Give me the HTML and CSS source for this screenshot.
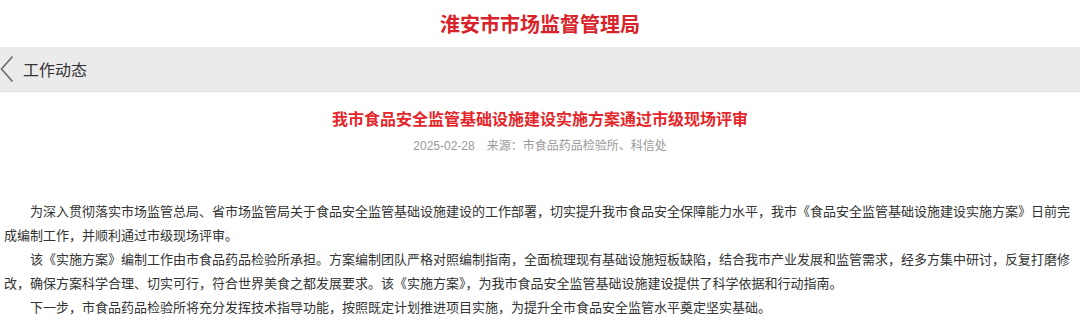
FILE: index.html
```html
<!DOCTYPE html>
<html lang="zh-CN">
<head>
<meta charset="utf-8">
<title>淮安市市场监督管理局</title>
<link rel="stylesheet" href="styles.css">
</head>
<body>
<header class="site-header">
  <h1 class="site-title">淮安市市场监督管理局</h1>
</header>
<nav class="nav-bar">
  <svg class="back-icon" width="14" height="28" viewBox="0 0 14 28" aria-hidden="true">
    <path d="M12.5 1.5 L1.5 14 L12.5 26.5" fill="none" stroke="#6b6b6b" stroke-width="1.6"/>
  </svg>
  <span class="nav-text">工作动态</span>
</nav>
<main class="article">
  <h2 class="article-title">我市食品安全监管基础设施建设实施方案通过市级现场评审</h2>
  <div class="article-meta"><span class="meta-date">2025-02-28</span><span class="meta-source">来源：市食品药品检验所、科信处</span></div>
  <div class="article-body">
    <p>为深入贯彻落实市场监管总局、省市场监管局关于食品安全监管基础设施建设的工作部署，切实提升我市食品安全保障能力水平，我市《食品安全监管基础设施建设实施方案》日前完成编制工作，并顺利通过市级现场评审。</p>
    <p>该《实施方案》编制工作由市食品药品检验所承担。方案编制团队严格对照编制指南，全面梳理现有基础设施短板缺陷，结合我市产业发展和监管需求，经多方集中研讨，反复打磨修改，确保方案科学合理、切实可行，符合世界美食之都发展要求。该《实施方案》，为我市食品安全监管基础设施建设提供了科学依据和行动指南。</p>
    <p>下一步，市食品药品检验所将充分发挥技术指导功能，按照既定计划推进项目实施，为提升全市食品安全监管水平奠定坚实基础。</p>
  </div>
</main>
</body>
</html>
```
FILE: styles.css
```css
* { box-sizing: border-box; }
html, body {
  margin: 0;
  padding: 0;
  background: #ffffff;
}
body {
  font-family: "Noto Sans CJK SC", "Noto Sans", sans-serif;
  color: #333333;
}
.site-header {
  height: 47px;
  display: flex;
  align-items: center;
  justify-content: center;
}
.site-title {
  margin: 0;
  font-size: 20px;
  line-height: 24px;
  font-weight: bold;
  color: #d9232a;
}
.nav-bar {
  height: 45px;
  background: #ebebeb;
  border-bottom: 1px solid #e0e0e0;
  display: flex;
  align-items: center;
  gap: 9px;
}
.back-icon {
  display: block;
  flex: none;
}
.nav-text {
  font-size: 16px;
  line-height: 20px;
  color: #333333;
}
.article {
  padding: 14px 4px 0;
}
.article-title {
  margin: 0;
  text-align: center;
  font-size: 16px;
  line-height: 24px;
  font-weight: bold;
  color: #e4262a;
}
.article-meta {
  margin-top: 5px;
  text-align: center;
  font-size: 12px;
  line-height: 20px;
  color: #9a9a9a;
}
.meta-date {
  font-family: "Liberation Sans", Arial, sans-serif;
  margin-right: 12px;
}
.article-body {
  margin-top: 43px;
  font-size: 13px;
  line-height: 24px;
  color: #333333;
}
.article-body p {
  margin: 0;
  text-indent: 2em;
}
```
